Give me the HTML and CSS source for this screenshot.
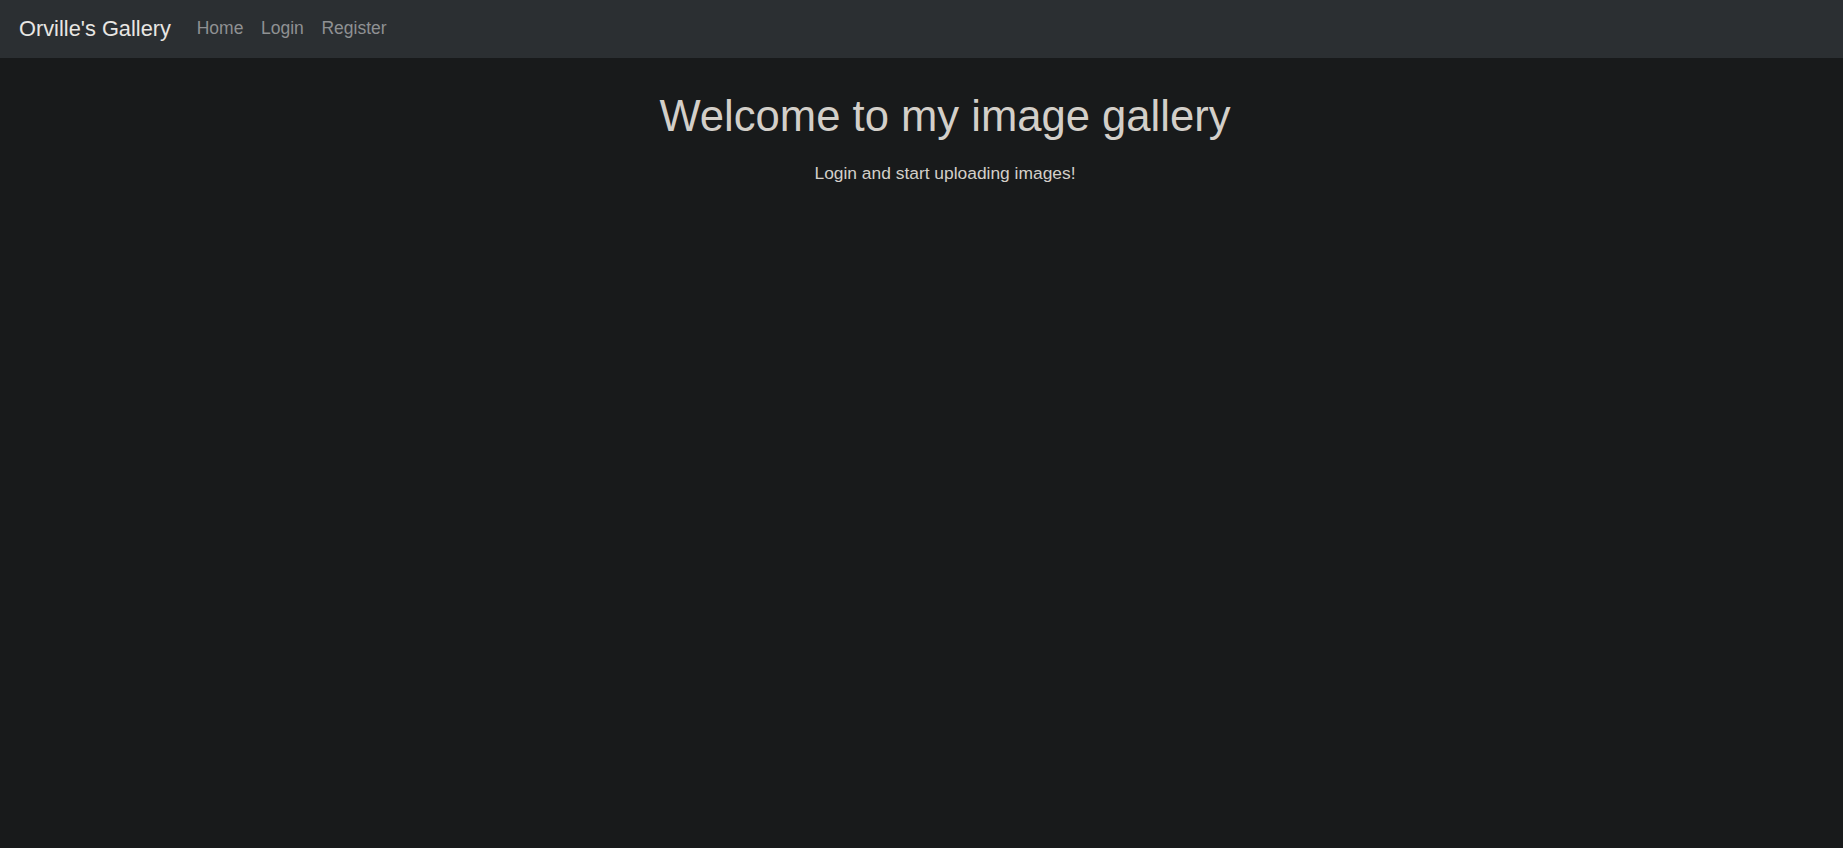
FILE: index.html
```html
<!DOCTYPE html>
<html lang="en">
<head>
<meta charset="utf-8">
<title>Orville's Gallery</title>
<link rel="stylesheet" href="styles.css">
</head>
<body>
<nav class="navbar">
  <a class="brand" href="#">Orville's Gallery</a>
  <ul class="nav">
    <li><a class="nav-link" href="#">Home</a></li>
    <li><a class="nav-link" href="#">Login</a></li>
    <li><a class="nav-link" href="#">Register</a></li>
  </ul>
</nav>
<main class="main">
  <h1 class="title">Welcome to my image gallery</h1>
  <p class="lead">Login and start uploading images!</p>
</main>
</body>
</html>
```
FILE: styles.css
```css
html, body {
  margin: 0;
  padding: 0;
}
body {
  background: #181a1b;
  color: #d3cfc9;
  font-family: "Liberation Sans", Arial, sans-serif;
  min-height: 848px;
}
.navbar {
  display: flex;
  align-items: center;
  height: 58px;
  padding: 0 0 0 19px;
  background: #2b2f32;
  box-sizing: border-box;
}
.brand {
  font-size: 21.8px;
  line-height: 33px;
  padding-bottom: 2px;
  color: #e8e6e3;
  text-decoration: none;
  margin-right: 17px;
  white-space: nowrap;
}
.nav {
  display: flex;
  list-style: none;
  margin: 0;
  padding: 0 0 2px;
}
.nav-link {
  display: block;
  padding: 0 8.8px;
  font-size: 17.5px;
  line-height: 26.4px;
  color: #8f9193;
  text-decoration: none;
}
.main {
  padding-left: 47px;
  text-align: center;
}
.title {
  margin: 32px 0 0;
  font-size: 43.6px;
  line-height: 52.8px;
  font-weight: 400;
  color: #d3cfc9;
}
.lead {
  margin: 17px 0 0;
  font-size: 17.4px;
  line-height: 26.4px;
  color: #d3cfc9;
}
```
